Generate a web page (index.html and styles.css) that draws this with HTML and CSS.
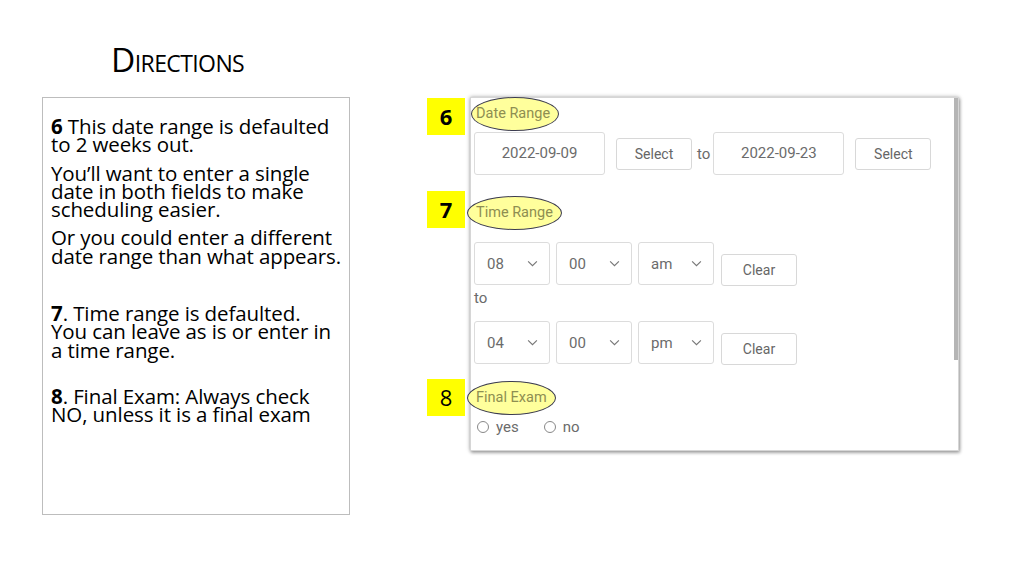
FILE: index.html
```html
<!DOCTYPE html>
<html lang="en">

<head>
    <meta charset="UTF-8">
    <meta name="viewport" content="width=device-width, initial-scale=1.0">
    <title>Directions</title>
    <link rel="stylesheet" href="styles.css">
</head>

<body>

    <h1 class="title">Directions</h1>

    <div class="main">

        <div class="notes">
            <p><b>6</b> This date range is defaulted<br>to 2 weeks out.</p>
            <p>You’ll want to enter a single<br>date in both fields to make<br>scheduling easier.</p>
            <p>Or you could enter a different<br>date range than what appears.</p>
            <p class="gap-big"><b>7</b>. Time range is defaulted.<br>You can leave as is or enter in<br>a time range.</p>
            <p class="gap-mid"><b>8</b>. Final Exam: Always check<br>NO, unless it is a final exam</p>
        </div>

        <div class="shot">
            <div class="scroll"></div>

            <span class="label label-date">Date Range<span class="badge bold">6</span></span>
            <div class="date-row">
                <div class="field">2022-09-09</div>
                <div class="btn btn-select">Select</div>
                <span class="to">to</span>
                <div class="field">2022-09-23</div>
                <div class="btn btn-select">Select</div>
            </div>

            <span class="label label-time">Time Range<span class="badge bold">7</span></span>
            <div class="time-row first">
                <div class="drop">08<svg viewBox="0 0 12 8"><path d="M1 1.5l5 5 5-5" /></svg></div>
                <div class="drop">00<svg viewBox="0 0 12 8"><path d="M1 1.5l5 5 5-5" /></svg></div>
                <div class="drop">am<svg viewBox="0 0 12 8"><path d="M1 1.5l5 5 5-5" /></svg></div>
                <div class="btn btn-clear">Clear</div>
            </div>
            <div class="to-line">to</div>
            <div class="time-row">
                <div class="drop">04<svg viewBox="0 0 12 8"><path d="M1 1.5l5 5 5-5" /></svg></div>
                <div class="drop">00<svg viewBox="0 0 12 8"><path d="M1 1.5l5 5 5-5" /></svg></div>
                <div class="drop">pm<svg viewBox="0 0 12 8"><path d="M1 1.5l5 5 5-5" /></svg></div>
                <div class="btn btn-clear">Clear</div>
            </div>

            <span class="label label-final">Final Exam<span class="badge">8</span></span>
            <div class="radios">
                <span class="radio"><i></i>yes</span>
                <span class="radio"><i></i>no</span>
            </div>
        </div>

    </div>

</body>

</html>
```

FILE: styles.css
```css
*,
*::after,
*::before {
    margin: 0;
    padding: 0;
    box-sizing: border-box;
}

body {
    background: #fff;
    width: 1024px;
    height: 576px;
    overflow: hidden;
    font-family: "Open Sans", "Noto Sans", sans-serif;
    color: #000;
}

.title {
    font-size: 33.5px;
    font-weight: 400;
    font-variant: small-caps;
    letter-spacing: -0.6px;
    line-height: 34px;
    margin: 42px 0 0 111px;
}

.main {
    display: flex;
    align-items: flex-start;
    margin: 21px 0 0 42px;
}

/* left text box */
.notes {
    width: 308px;
    height: 418px;
    border: 1px solid #bdbdbd;
    padding: 19px 0 0 8px;
    font-size: 20.5px;
    line-height: 18.3px;
    letter-spacing: -0.1px;
    white-space: nowrap;
}

.notes p {
    margin-bottom: 10px;
}

.notes .gap-big {
    margin-top: 39px;
}

.notes .gap-mid {
    margin-top: 28px;
}

/* screenshot of the form */
.shot {
    position: relative;
    width: 489px;
    height: 354px;
    margin-left: 120px;
    border: 1px solid #d6d6d6;
    box-shadow: 0 0 4px rgba(0, 0, 0, 0.35), 1px 2px 3px rgba(0, 0, 0, 0.25);
    padding: 0 0 0 3px;
    font-family: Roboto, "Liberation Sans", sans-serif;
    color: #6b6b6b;
    display: flex;
    flex-direction: column;
    align-items: flex-start;
}

.scroll {
    position: absolute;
    right: 0;
    top: 0;
    width: 4px;
    height: 262px;
    background: #b5b5b5;
}

.label {
    position: relative;
    display: inline-block;
    font-size: 14.5px;
    line-height: 18px;
    color: #8e8e52;
    background: #ffff9c;
    border: 1px solid #3c3c50;
    border-radius: 50%;
    padding: 7px 8px 7px 4px;
}

.label-date {
    margin: -1px 0 0 -3px;
    padding-left: 4px;
}

.label-time {
    margin: 21px 0 0 -7px;
    padding-left: 8px;
}

.label-final {
    margin: 17px 0 0 -7px;
    padding-left: 8px;
}

.badge {
    position: absolute;
    top: 0;
    left: -45px;
    width: 38px;
    height: 37px;
    background: #ffff00;
    color: #000;
    font-family: "Open Sans", "Noto Sans", sans-serif;
    font-size: 22px;
    line-height: 37px;
    text-align: center;
}

.label-time .badge {
    top: -6px;
    left: -41px;
}

.label-final .badge {
    top: -3px;
    left: -41px;
}

.bold {
    font-weight: 700;
}

.date-row {
    display: flex;
    align-items: center;
    margin-top: 1px;
}

.field {
    width: 131px;
    height: 43px;
    border: 1px solid #dcdcdc;
    border-radius: 3px;
    text-align: center;
    font-size: 15px;
    line-height: 41px;
}

.btn {
    height: 32px;
    width: 76px;
    border: 1px solid #d8d8d8;
    border-radius: 3px;
    text-align: center;
    font-size: 14px;
    line-height: 30px;
    color: #666;
}

.btn-select {
    margin-left: 11px;
}

.to {
    font-size: 15px;
    margin: 0 3px 0 5px;
}

.time-row {
    display: flex;
    align-items: flex-end;
    gap: 6px;
    margin-top: 14px;
}

.time-row.first {
    margin-top: 12px;
}

.drop {
    width: 76px;
    height: 43px;
    border: 1px solid #dcdcdc;
    border-radius: 3px;
    display: flex;
    align-items: center;
    justify-content: space-between;
    padding: 0 11px 0 12px;
    font-size: 15px;
}

.drop svg {
    width: 11px;
    height: 7px;
    fill: none;
    stroke: #777;
    stroke-width: 1.3;
}

.btn-clear {
    margin-left: 1px;
    margin-bottom: -1px;
}

.to-line {
    font-size: 15px;
    line-height: 18px;
    margin-top: 4px;
}

.radios {
    display: flex;
    gap: 25px;
    margin-top: 3px;
    margin-left: 3px;
    font-size: 15px;
    line-height: 18px;
}

.radio {
    display: flex;
    align-items: center;
}

.radio i {
    width: 12px;
    height: 12px;
    border: 1px solid #888;
    border-radius: 50%;
    margin-right: 7px;
}
```
